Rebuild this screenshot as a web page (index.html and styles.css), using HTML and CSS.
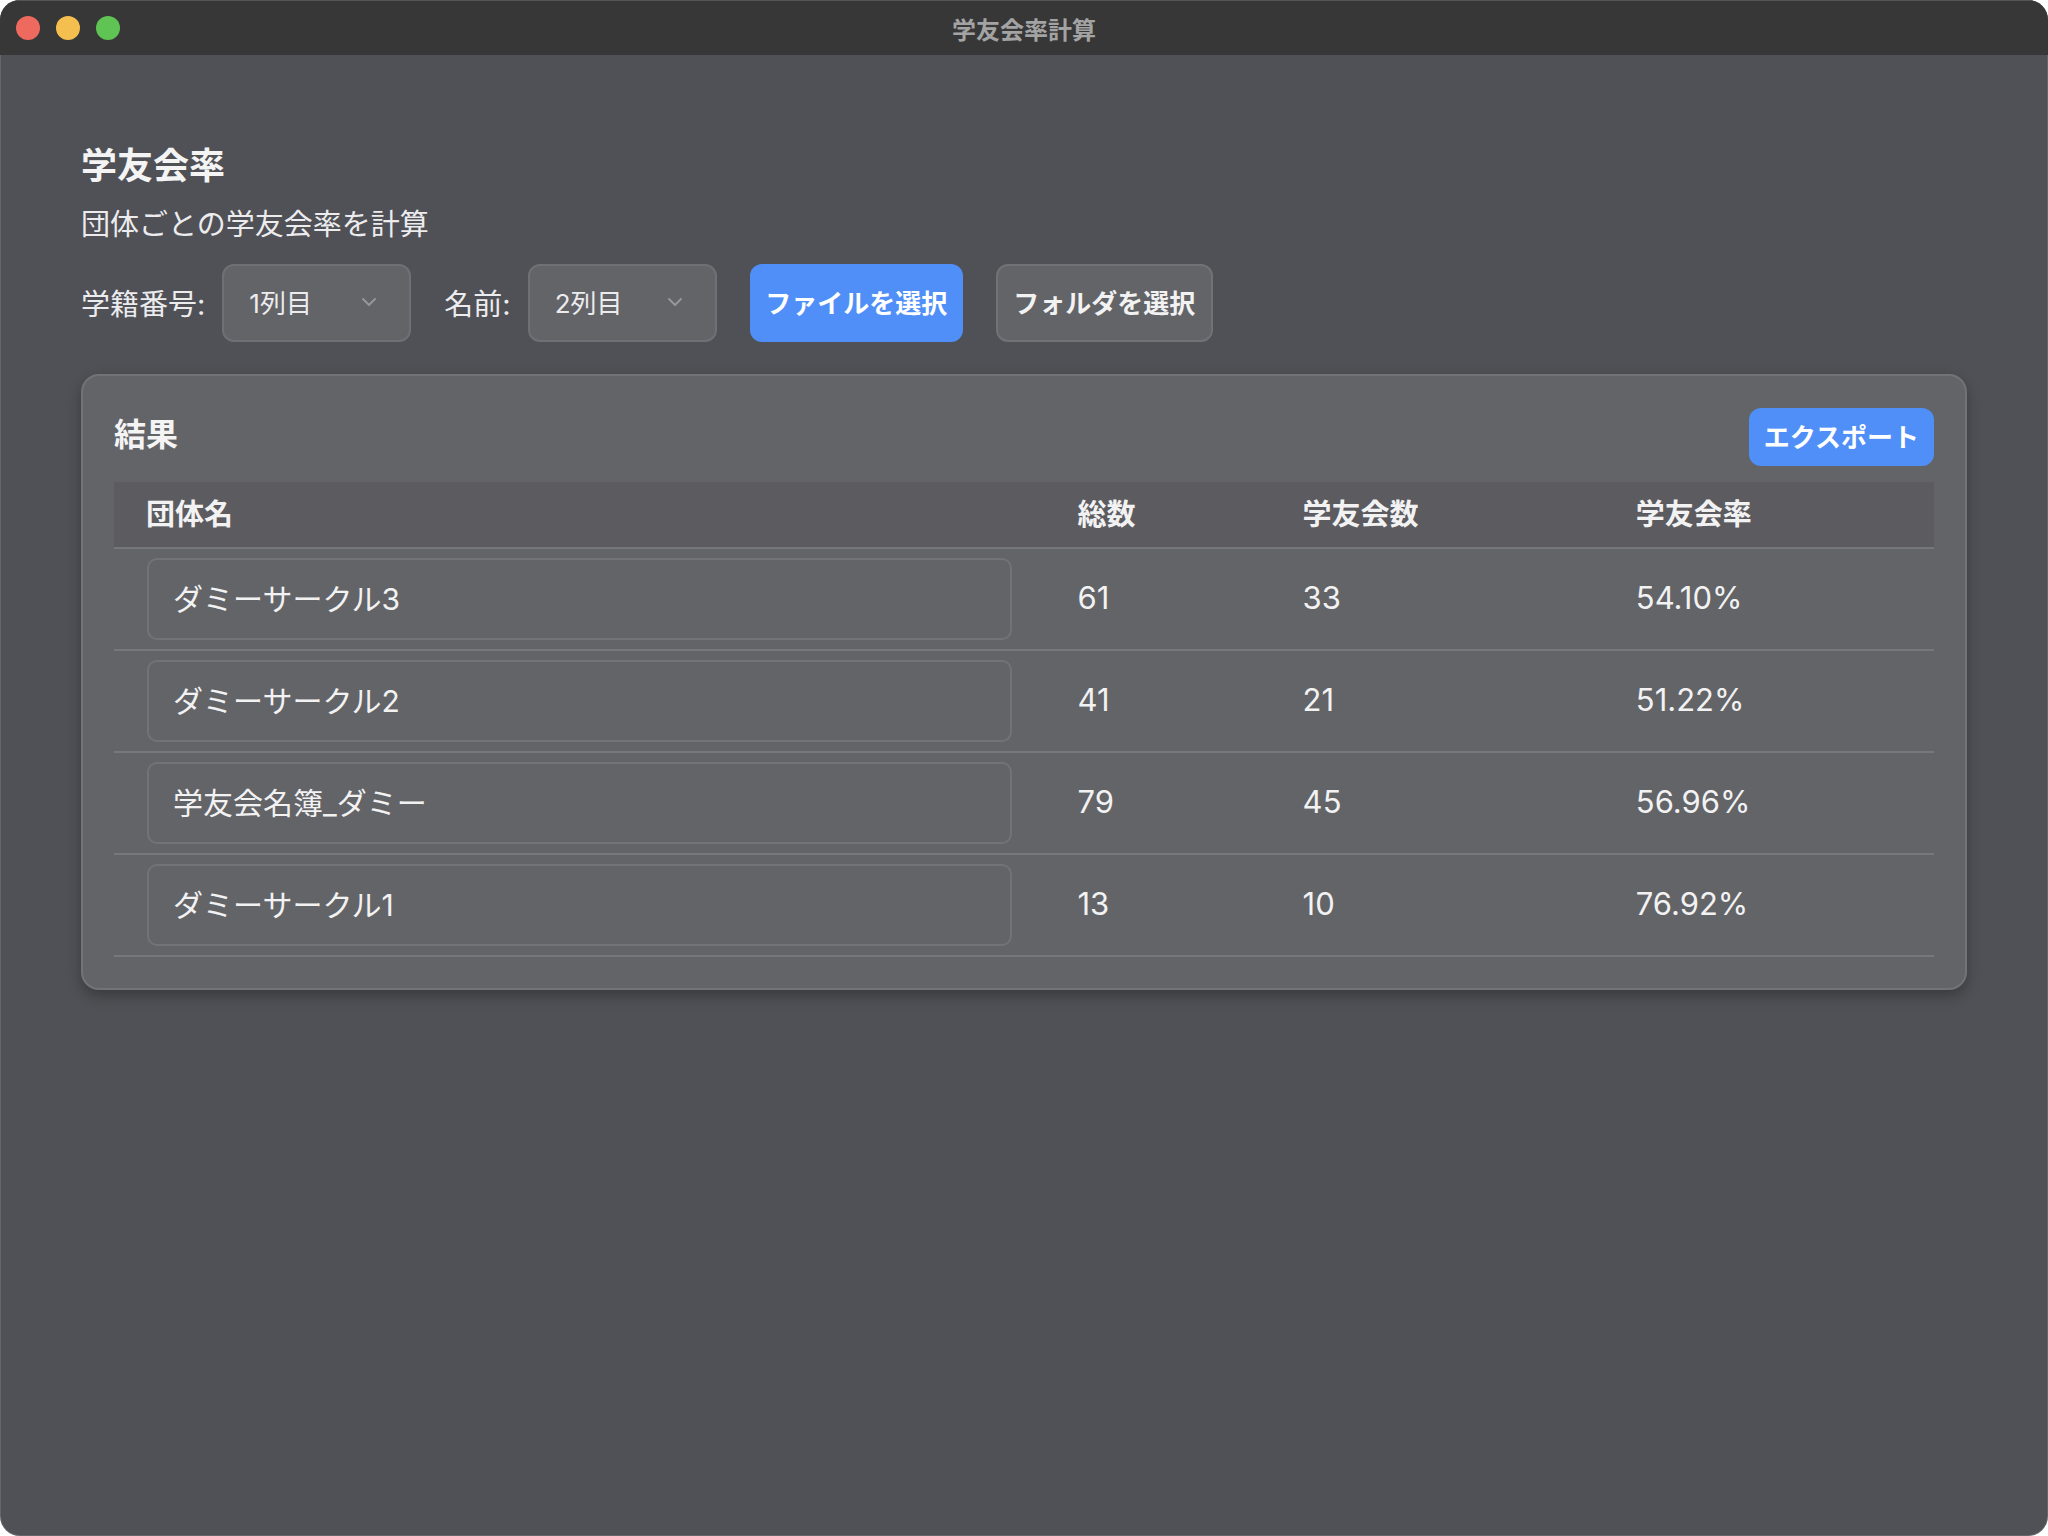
FILE: index.html
```html
<!DOCTYPE html>
<html lang="ja">
<head>
<meta charset="utf-8">
<title>学友会率計算</title>
<link rel="stylesheet" href="styles.css">
</head>
<body>
<div class="window">
  <header class="titlebar">
    <div class="lights">
      <span class="light red"></span>
      <span class="light yellow"></span>
      <span class="light green"></span>
    </div>
    <div class="window-title">学友会率計算</div>
  </header>
  <main class="content">
    <h1 class="heading">学友会率</h1>
    <p class="subtitle">団体ごとの学友会率を計算</p>
    <div class="controls">
      <div class="field">
        <span class="label">学籍番号:</span>
        <div class="select">
          <span class="select-text">1列目</span>
          <svg class="chevron" width="14" height="8" viewBox="0 0 14 8"><polyline points="1,1 7,7 13,1" fill="none" stroke="#97989c" stroke-width="1.8" stroke-linecap="round" stroke-linejoin="round"/></svg>
        </div>
      </div>
      <div class="field">
        <span class="label">名前:</span>
        <div class="select">
          <span class="select-text">2列目</span>
          <svg class="chevron" width="14" height="8" viewBox="0 0 14 8"><polyline points="1,1 7,7 13,1" fill="none" stroke="#97989c" stroke-width="1.8" stroke-linecap="round" stroke-linejoin="round"/></svg>
        </div>
      </div>
      <button class="btn btn-primary btn-lg">ファイルを選択</button>
      <button class="btn btn-secondary btn-lg">フォルダを選択</button>
    </div>
    <section class="card">
      <div class="card-head">
        <h2 class="card-title">結果</h2>
        <button class="btn btn-primary btn-sm">エクスポート</button>
      </div>
      <table class="results">
        <colgroup>
          <col class="c-name">
          <col class="c-total">
          <col class="c-members">
          <col class="c-rate">
        </colgroup>
        <thead>
          <tr><th>団体名</th><th>総数</th><th>学友会数</th><th>学友会率</th></tr>
        </thead>
        <tbody>
          <tr><td><div class="name-field">ダミーサークル3</div></td><td>61</td><td>33</td><td>54.10%</td></tr>
          <tr><td><div class="name-field">ダミーサークル2</div></td><td>41</td><td>21</td><td>51.22%</td></tr>
          <tr><td><div class="name-field">学友会名簿_ダミー</div></td><td>79</td><td>45</td><td>56.96%</td></tr>
          <tr><td><div class="name-field">ダミーサークル1</div></td><td>13</td><td>10</td><td>76.92%</td></tr>
        </tbody>
      </table>
    </section>
  </main>
</div>
</body>
</html>
```

FILE: styles.css
```css
* { box-sizing: border-box; }

html, body {
  margin: 0;
  padding: 0;
  background: #ffffff;
}

body {
  font-family: Inter, "Noto Sans CJK JP", sans-serif;
  color: #f0f0f2;
}

.window {
  width: 2048px;
  height: 1536px;
  border-radius: 20px;
  overflow: hidden;
  background: #505156;
  display: flex;
  flex-direction: column;
  box-shadow: inset 0 0 0 1px rgba(255,255,255,0.12);
}

.titlebar {
  height: 55px;
  flex: 0 0 55px;
  background: #373737;
  display: flex;
  align-items: center;
  position: relative;
  border-top: 1px solid #555555;
}

.lights {
  display: flex;
  gap: 16px;
  padding-left: 16px;
}

.light {
  width: 24px;
  height: 24px;
  border-radius: 50%;
  display: block;
}
.red { background: #ee6a5f; }
.yellow { background: #f5bf4f; }
.green { background: #5fc454; }

.window-title {
  position: absolute;
  left: 0;
  right: 0;
  top: 0;
  bottom: 0;
  display: flex;
  align-items: center;
  justify-content: center;
  font-size: 24px;
  font-weight: 700;
  color: #a3a3a3;
  pointer-events: none;
}

.content {
  padding: 87px 81px 0 81px;
  display: flex;
  flex-direction: column;
}

.heading {
  margin: 0;
  font-size: 36px;
  line-height: 48px;
  font-weight: 700;
  color: #f4f4f5;
}

.subtitle {
  margin: 15px 0 0 0;
  font-size: 29px;
  line-height: 40px;
  color: #ececee;
}

.controls {
  margin-top: 19px;
  display: flex;
  align-items: center;
  gap: 33px;
}

.field {
  display: flex;
  align-items: center;
  gap: 16px;
}

.label {
  font-size: 29px;
  color: #ececee;
  padding: 0 1px 3px 0;
}

.select {
  width: 189px;
  height: 78px;
  border-radius: 12px;
  border: 2px solid #6f7075;
  background: #636468;
  display: flex;
  align-items: center;
  justify-content: space-between;
  padding: 0 33px 3px 25px;
}

.select-text {
  font-size: 26px;
  color: #ececee;
}

.chevron { display: block; }

.btn {
  font-family: Inter, "Noto Sans CJK JP", sans-serif;
  font-weight: 700;
  font-size: 26px;
  color: #ffffff;
  border-radius: 12px;
  cursor: pointer;
  margin: 0;
  white-space: nowrap;
}

.btn-lg {
  height: 78px;
  padding: 0 15.5px 3px 15.5px;
}

.btn-sm {
  height: 58px;
  padding: 0 15px 3px 15px;
}

.btn-primary {
  background: #4f8ff7;
  border: 0;
}

.btn-secondary {
  background: #636468;
  border: 2px solid #717276;
  color: #f2f2f3;
}

.card {
  margin-top: 32px;
  background: #636468;
  border: 2px solid #727377;
  border-radius: 18px;
  padding: 32px 31px 31px 31px;
  box-shadow: 0 6px 14px rgba(0,0,0,0.28);
}

.card-head {
  display: flex;
  align-items: center;
  justify-content: space-between;
  margin-bottom: 16px;
}

.card-title {
  margin: 0;
  font-size: 32px;
  line-height: 44px;
  padding-bottom: 4px;
  font-weight: 700;
  color: #f4f4f5;
}

.results {
  width: 100%;
  table-layout: fixed;
  border-collapse: collapse;
}

.c-name { width: 931px; }
.c-total { width: 225px; }
.c-members { width: 333px; }
.c-rate { width: 330px; }

.results th {
  height: 66px;
  background: #5b5b60;
  border-bottom: 2px solid #76777b;
  text-align: left;
  font-size: 29px;
  font-weight: 700;
  color: #f2f2f3;
  padding: 0 32px 5px 32px;
}

.results td {
  height: 102px;
  border-bottom: 2px solid #77787c;
  padding: 7px 32px 11px 32px;
  font-size: 31px;
  color: #f2f2f3;
  vertical-align: middle;
}

.results td:first-child {
  padding: 9px 34px 9px 33px;
}

.name-field {
  height: 82px;
  border: 2px solid #727377;
  border-radius: 10px;
  background: #636468;
  display: flex;
  align-items: center;
  padding: 0 0 5px 24px;
  font-size: 30px;
  color: #f2f2f3;
}
```
